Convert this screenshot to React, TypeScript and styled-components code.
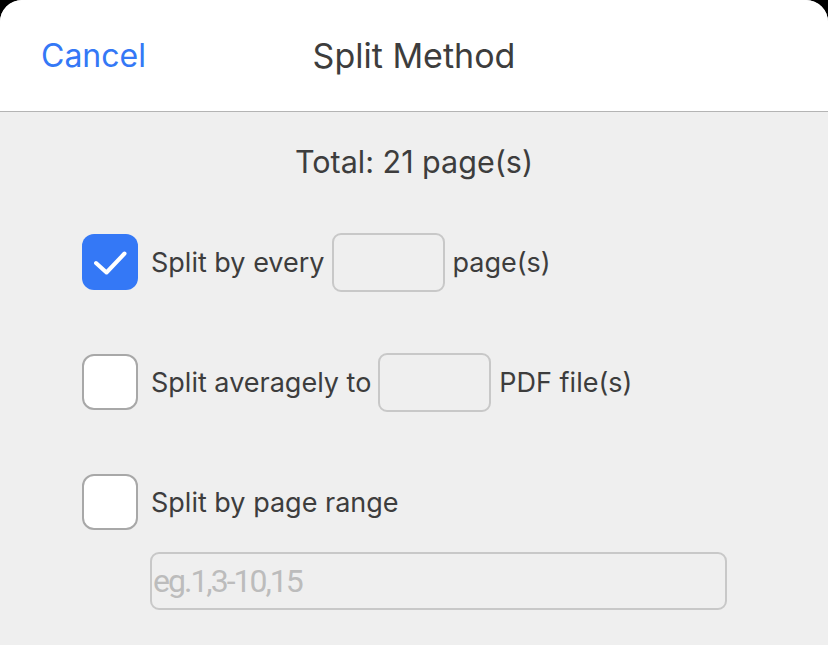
import { createGlobalStyle } from 'styled-components';
import styled from 'styled-components';

const colors = {
  blue: '#3478f6',
  text: '#3d3d3d',
  border: '#c8c8c8',
  boxBorder: '#a8a8a8',
  panel: '#efefef',
  placeholder: '#bcbcbc',
};

const GlobalStyle = createGlobalStyle`
  html, body {
    margin: 0;
    padding: 0;
    background: #000;
    font-family: Inter, Roboto, "Liberation Sans", sans-serif;
  }
  * { box-sizing: border-box; }
`;

const options = [
  { label: 'Split by every', input: true, after: 'page(s)', checked: true },
  { label: 'Split averagely to', input: true, after: 'PDF file(s)', checked: false },
  { label: 'Split by page range', input: false, after: '', checked: false },
];

const App = () => {
  return (
    <>
      <GlobalStyle />
      <Sheet>
        <Header>
          <Cancel>Cancel</Cancel>
          <Title>Split Method</Title>
        </Header>
        <Body>
          <Total>Total: 21 page(s)</Total>
          <Options>
            {options.map((opt, index) => (
              <Row key={index}>
                <Check $checked={opt.checked}>
                  {opt.checked && (
                    <svg width='36' height='36' viewBox='0 0 36 36'>
                      <path
                        d='M4 19 L14.5 28.5 L32.5 9.5'
                        fill='none'
                        stroke='#fff'
                        strokeWidth='4'
                        strokeLinecap='round'
                        strokeLinejoin='round'
                      />
                    </svg>
                  )}
                </Check>
                <Label>{opt.label}</Label>
                {opt.input && <SmallInput />}
                {opt.after && <Label>{opt.after}</Label>}
              </Row>
            ))}
            <RangeInput placeholder='eg.1,3-10,15' />
          </Options>
        </Body>
      </Sheet>
    </>
  );
};

export default App;

const Sheet = styled.div`
  width: 828px;
  height: 645px;
  display: flex;
  flex-direction: column;
  border-radius: 22px 22px 0 0;
  overflow: hidden;
  background: ${colors.panel};
`;

const Header = styled.div`
  position: relative;
  height: 112px;
  flex-shrink: 0;
  background: #fff;
  border-bottom: 1px solid #b4b4b4;
  display: flex;
  align-items: center;
  justify-content: center;
`;

const Cancel = styled.div`
  position: absolute;
  left: 41px;
  top: 0;
  bottom: 0;
  display: flex;
  align-items: center;
  color: ${colors.blue};
  font-size: 32px;
`;

const Title = styled.div`
  color: ${colors.text};
  font-size: 34px;
  margin-bottom: 1px;
`;

const Body = styled.div`
  flex: 1;
  display: flex;
  flex-direction: column;
  padding-top: 30px;
`;

const Total = styled.div`
  text-align: center;
  font-size: 30.5px;
  line-height: 40px;
  color: ${colors.text};
`;

const Options = styled.div`
  display: flex;
  flex-direction: column;
  padding: 50px 0 0 82px;
  gap: 60px;
`;

const Row = styled.div`
  height: 60px;
  display: flex;
  align-items: center;
  gap: 7px;
`;

const Check = styled.div<{ $checked: boolean }>`
  width: 56px;
  height: 56px;
  margin-right: 6px;
  border-radius: 12px;
  display: flex;
  align-items: center;
  justify-content: center;
  background: ${(p) => (p.$checked ? colors.blue : '#fff')};
  border: ${(p) => (p.$checked ? 'none' : `2px solid ${colors.boxBorder}`)};
`;

const Label = styled.span`
  font-size: 27px;
  color: ${colors.text};
`;

const SmallInput = styled.div`
  width: 113px;
  height: 59px;
  border: 2px solid ${colors.border};
  border-radius: 9px;
  margin-right: 1px;
`;

const RangeInput = styled.input`
  margin: -40px 0 0 68px;
  width: 577px;
  height: 58px;
  border: 2px solid ${colors.border};
  border-radius: 9px;
  background: transparent;
  padding: 0 0 0 1px;
  font-family: Roboto, "Liberation Sans", sans-serif;
  font-size: 32px;
  letter-spacing: -2px;
  outline: none;
  &::placeholder {
    color: ${colors.placeholder};
  }
`;
